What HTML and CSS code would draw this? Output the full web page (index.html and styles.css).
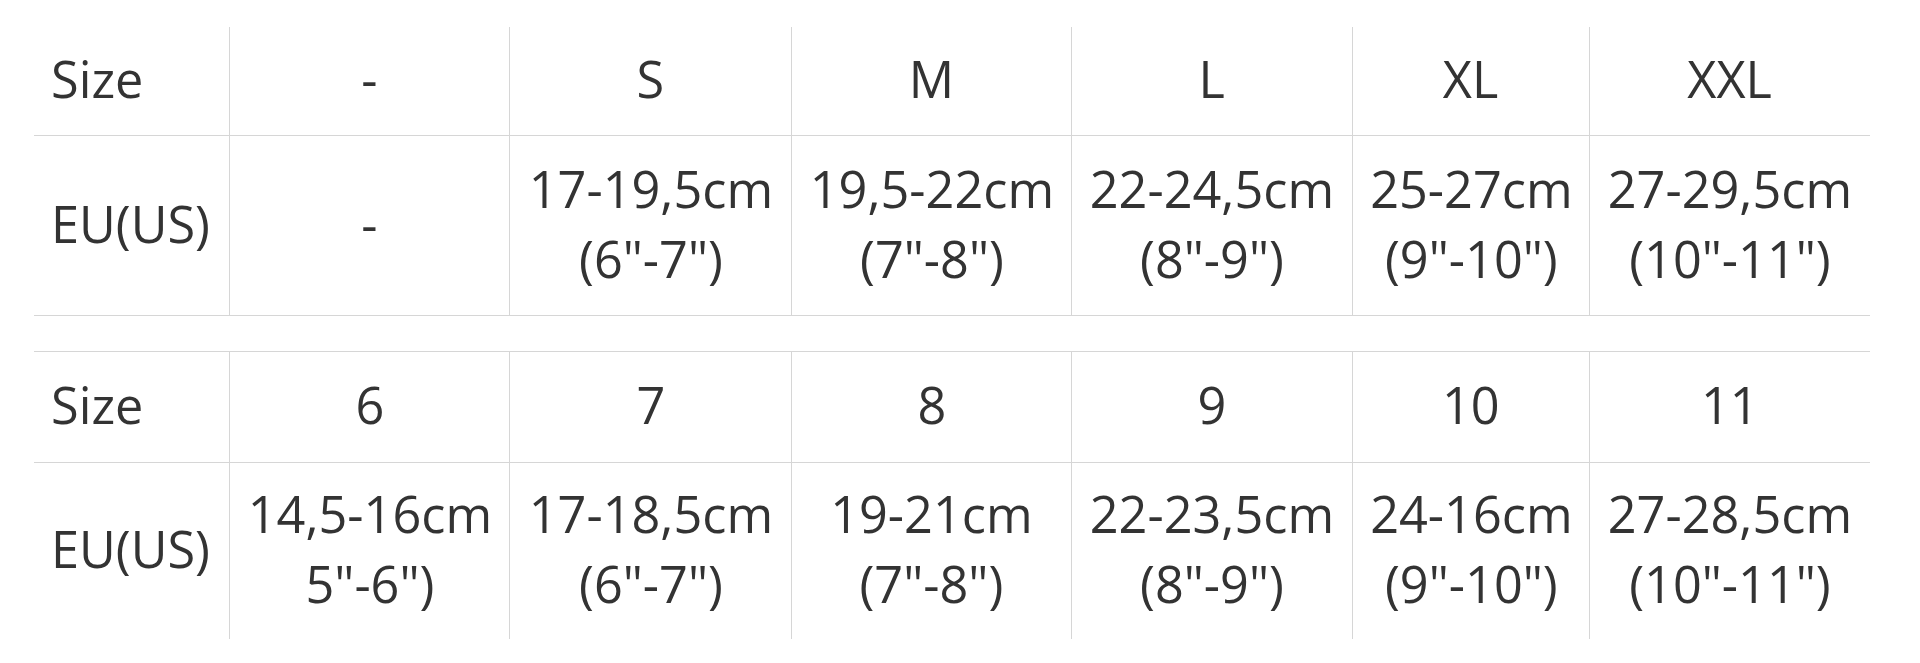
FILE: index.html
```html
<!DOCTYPE html>
<html lang="en">
<head>
<meta charset="utf-8">
<title>Size chart</title>
<link rel="stylesheet" href="styles.css">
</head>
<body>
<main class="charts">
  <section class="size-grid first">
    <div class="cell label top"><span class="t">Size</span></div>
    <div class="cell top"><span class="t">-</span></div>
    <div class="cell top"><span class="t">S</span></div>
    <div class="cell top"><span class="t">M</span></div>
    <div class="cell top"><span class="t">L</span></div>
    <div class="cell top"><span class="t">XL</span></div>
    <div class="cell top"><span class="t">XXL</span></div>

    <div class="cell label bottom"><span class="t">EU(US)</span></div>
    <div class="cell bottom"><span class="t">-</span></div>
    <div class="cell bottom"><span class="t">17-19,5cm<br>(6"-7")</span></div>
    <div class="cell bottom"><span class="t">19,5-22cm<br>(7"-8")</span></div>
    <div class="cell bottom"><span class="t">22-24,5cm<br>(8"-9")</span></div>
    <div class="cell bottom"><span class="t">25-27cm<br>(9"-10")</span></div>
    <div class="cell bottom"><span class="t">27-29,5cm<br>(10"-11")</span></div>
  </section>

  <section class="size-grid second">
    <div class="cell label top"><span class="t">Size</span></div>
    <div class="cell top"><span class="t">6</span></div>
    <div class="cell top"><span class="t">7</span></div>
    <div class="cell top"><span class="t">8</span></div>
    <div class="cell top"><span class="t">9</span></div>
    <div class="cell top"><span class="t">10</span></div>
    <div class="cell top"><span class="t">11</span></div>

    <div class="cell label bottom"><span class="t">EU(US)</span></div>
    <div class="cell bottom"><span class="t">14,5-16cm<br>5"-6")</span></div>
    <div class="cell bottom"><span class="t">17-18,5cm<br>(6"-7")</span></div>
    <div class="cell bottom"><span class="t">19-21cm<br>(7"-8")</span></div>
    <div class="cell bottom"><span class="t">22-23,5cm<br>(8"-9")</span></div>
    <div class="cell bottom"><span class="t">24-16cm<br>(9"-10")</span></div>
    <div class="cell bottom"><span class="t">27-28,5cm<br>(10"-11")</span></div>
  </section>
</main>
</body>
</html>
```

FILE: styles.css
```css
html, body {
  margin: 0;
  padding: 0;
  background: #ffffff;
}

.charts {
  padding: 27px 0 0 34px;
  font-family: "Open Sans", "Noto Sans", sans-serif;
  font-size: 52px;
  line-height: 70px;
  color: #333333;
}

.size-grid {
  display: grid;
  grid-template-columns: 195px 280px 282px 280px 281px 237px 281px;
  width: 1836px;
}

.size-grid.first {
  grid-template-rows: 108px 181px;
}

.size-grid.second {
  margin-top: 35px;
  grid-template-rows: 111px 177px;
}

.cell {
  box-sizing: border-box;
  display: flex;
  align-items: center;
  justify-content: center;
  text-align: center;
  padding-bottom: 6px;
  border-left: 1px solid #d6d6d6;
}

.cell.label {
  justify-content: flex-start;
  text-align: left;
  border-left: none;
  padding-left: 17px;
}

.cell.bottom {
  border-top: 1px solid #d6d6d6;
}

.first .cell.bottom {
  border-bottom: 1px solid #d6d6d6;
}

.second .cell.top {
  border-top: 1px solid #d6d6d6;
}

.t {
  display: inline-block;
  white-space: nowrap;
  transform: scaleX(0.97);
  transform-origin: center;
}

.label .t {
  transform-origin: left center;
}
```
